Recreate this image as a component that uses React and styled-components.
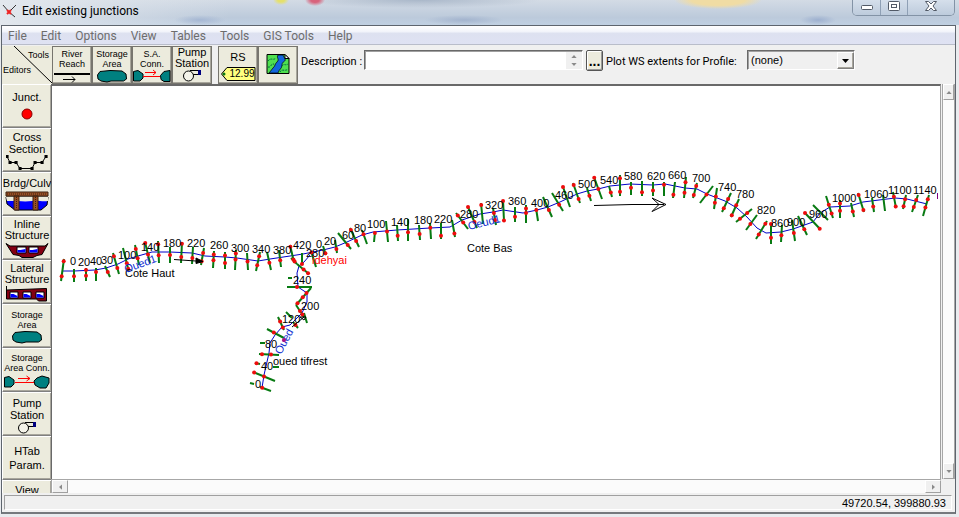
import React from "react";
import styled, { createGlobalStyle, css } from "styled-components";

const GlobalStyle = createGlobalStyle`
  * { box-sizing: border-box; }
  html, body { margin: 0; height: 100%; overflow: hidden; }
  body { font-family: "Liberation Sans", Arial, sans-serif; font-size: 11px; color: #000; }
  button, input, select, textarea { font: inherit; color: inherit; border-radius: 0; }
`;

const Frame = styled.div`
  height: 100vh;
  display: flex;
  flex-direction: column;
  background: #e9ebee;
`;

const TitleBar = styled.header`
  height: 25px;
  flex: none;
  display: flex;
  align-items: flex-start;
  padding: 0 4px 0 2px;
  background:
    radial-gradient(ellipse 8px 5px at 281px 0, #e5e06b 40%, transparent 100%),
    radial-gradient(ellipse 10px 6px at 315px 0, #d8637c 40%, transparent 100%),
    radial-gradient(ellipse 26px 5px at 200px 20px, #a5b7d3, transparent),
    radial-gradient(ellipse 40px 5px at 464px 20px, #a3b4ce, transparent),
    radial-gradient(ellipse 18px 5px at 818px 20px, #9db0cf, transparent),
    radial-gradient(ellipse 44px 9px at 718px 0, #f0dca4 60%, transparent 100%),
    radial-gradient(ellipse 120px 8px at 420px 0, #a9b7c9, transparent),
    linear-gradient(90deg, #e2e7ed, transparent 24%),
    linear-gradient(#d3dbe5, #bccadb 70%, #c0d0e2);
`;

const Title = styled.h1`
  flex: 1;
  margin: 0 0 0 4px;
  font: 12px/22px Roboto, "Segoe UI", sans-serif;
`;

const WindowButtons = styled.div`
  display: flex;
  height: 16px;
  border: 1px solid #8393a6;
  border-top: 0;
  border-radius: 0 0 5px 5px;
  overflow: hidden;
`;

const WindowButton = styled.button`
  width: ${(p) => (p.$wide ? 47 : 27)}px;
  padding: 0;
  border: 0;
  border-left: ${(p) => (p.$first ? "0" : "1px solid #8fa0b5")};
  background: linear-gradient(#d5dfeb, #bdcbdc);
  display: flex;
  justify-content: center;
  align-items: flex-start;
`;

const Client = styled.div`
  flex: 1;
  min-height: 0;
  margin: 0 3px 3px 1px;
  border: 1px solid #5e656e;
  border-bottom: 2px solid #75797d;
  display: flex;
  flex-direction: column;
  background: #f0f0f0;
`;

const MenuBar = styled.nav`
  height: 19px;
  flex: none;
  display: flex;
  align-items: center;
  gap: 14px;
  padding: 1px 6px 0;
  background: linear-gradient(#fff 0, #f3f5fb 30%, #dde1f0 42%, #dfe2f3 100%);
  border-bottom: 1px solid #b9bdca;
`;

const MenuItem = styled.button`
  padding: 0;
  border: 0;
  background: none;
  color: #6d6d6d;
  font: 12px/16px Roboto, "Segoe UI", sans-serif;
`;

const ToolBar = styled.div`
  height: 39px;
  flex: none;
  display: flex;
  align-items: flex-start;
  padding-top: 1px;
`;

const Corner = styled.div`
  width: 50px;
  height: 38px;
  flex: none;
  position: relative;
  display: flex;
  flex-direction: column;
  justify-content: space-between;
  padding: 3px 3px 8px 1px;
  background: #ecebdd;
  font-size: 9px;
  line-height: 12px;
`;

const CornerLine = styled.svg`
  position: absolute;
  inset: 0;
  width: 100%;
  height: 100%;
`;

const CornerText = styled.span`
  text-align: ${(p) => p.$align};
`;

const raised = css`
  border: 1px solid;
  border-color: #fff #808080 #808080 #fff;
  box-shadow: inset -1px -1px #a8a69c;
`;

const Tile = styled.button`
  ${raised}
  flex: none;
  width: ${(p) => (p.$side ? 50 : 40)}px;
  height: ${(p) => (p.$side ? 44 : 38)}px;
  padding: ${(p) => p.$pad || 0}px 0 0;
  display: flex;
  flex-direction: column;
  align-items: center;
  background: #ecebdd;
  outline: ${(p) => (p.$side ? "0" : "1px solid #77756e")};
  outline-offset: -1px;
  font-size: ${(p) => (p.$small ? 9 : 11)}px;
  line-height: ${(p) => p.$line || (p.$small ? 10 : 12)}px;
  white-space: pre;
  overflow: hidden;

  & > svg { flex: none; display: block; margin-top: ${(p) => p.$gap || 0}px; }
`;

const ToolGroup = styled.div`
  display: flex;
  margin-right: ${(p) => p.$after}px;
`;

const FieldLabel = styled.label`
  flex: none;
  min-width: ${(p) => p.$width}px;
  font-family: Roboto, sans-serif;
  line-height: 31px;
  white-space: nowrap;
`;

const sunken = css`
  border: 1px solid;
  border-color: #696969 #fff #fff #696969;
  box-shadow: inset 1px 1px #a0a0a0;
`;

const DescriptionBox = styled.div`
  ${sunken}
  width: 219px;
  height: 20px;
  margin: 4px 3px 0 0;
  display: flex;
  background: #fff;
`;

const Description = styled.textarea`
  flex: 1;
  min-width: 0;
  height: 18px;
  padding: 2px 3px;
  border: 0;
  background: transparent;
  resize: none;
  outline: 0;
  overflow: hidden;
`;

const Spinner = styled.div`
  width: 16px;
  margin-top: 1px;
  display: flex;
  flex-direction: column;
  background: #f0f0f0;
`;

const SpinButton = styled.button`
  flex: 1;
  padding: 0;
  border: 0;
  background: transparent;
  display: grid;
  place-items: center;
`;

const Ellipsis = styled.button`
  width: 17px;
  height: 21px;
  margin: 4px 3px 0 0;
  padding: 0;
  border: 1px solid #555;
  border-radius: 2px;
  background: #ecebdd;
  box-shadow: inset 1px 1px #fff, inset -1px -1px #999;
  font-weight: bold;
  font-size: 14px;
  line-height: 14px;
`;

const SelectBox = styled.div`
  ${sunken}
  position: relative;
  width: 108px;
  height: 20px;
  margin-top: 4px;
`;

const Select = styled.select`
  appearance: none;
  width: 100%;
  height: 100%;
  padding: 0 18px 0 3px;
  border: 0;
  background: transparent;
  outline: 0;
`;

const SelectArrow = styled.span`
  ${raised}
  position: absolute;
  top: 1px;
  right: 0;
  width: 17px;
  height: 17px;
  display: grid;
  place-items: center;
  background: #f0f0f0;
  pointer-events: none;
`;

const Main = styled.main`
  flex: 1;
  min-height: 0;
  display: grid;
  grid-template-columns: 49px minmax(0, 1fr) 14px;
  grid-template-rows: minmax(0, 1fr) 14px;
`;

const Sidebar = styled.aside`
  grid-row: 1 / 3;
  display: flex;
  flex-direction: column;
  overflow: hidden;
  background: #8d8d89;
`;

const Canvas = styled.section`
  border: solid #696969;
  border-width: 2px 1px 0 1px;
  border-right-color: #a0a0a0;
  background: #fff;
  overflow: hidden;
`;

const MapDrawing = styled.svg`
  display: block;
  width: 100%;
  height: 100%;
`;

const ScrollTrack = styled.div`
  display: flex;
  justify-content: space-between;
  flex-direction: ${(p) => (p.$vertical ? "column" : "row")};
  margin-left: ${(p) => (p.$vertical ? 1 : 0)}px;
  background: #fbfbfb;
  border: solid #a7a7a7;
  border-width: ${(p) => (p.$vertical ? "0 1px" : "1px 0 0 1px")};
`;

const ScrollButton = styled.button`
  ${raised}
  width: ${(p) => (p.$vertical ? "100%" : "16px")};
  height: ${(p) => (p.$vertical ? "16px" : "100%")};
  padding: 0;
  display: grid;
  place-items: center;
  background: #f0f0f0;
  border-color: #fff #a0a0a0 #a0a0a0 #fff;
  box-shadow: none;
`;

const StatusBar = styled.footer`
  flex: none;
  height: 19px;
  padding: 2px 3px 1px 2px;
  background: #f0f0f0;
`;

const Coordinates = styled.output`
  display: block;
  height: 15px;
  padding-right: 5px;
  border: 1px solid;
  border-color: #a0a0a0 #fff #fff #a0a0a0;
  text-align: right;
  line-height: 14px;
`;

const Arrow = ({ dir, color = "#8a8a8a", small }) => {
  const d = {
    up: "M0 4h7L3.5 0z",
    down: "M0 0h7L3.5 4z",
    left: "M4 0v7L0 3.5z",
    right: "M0 0v7l4-3.5z",
  }[dir];
  const tall = dir === "left" || dir === "right";
  const w = tall ? 4 : 7;
  const h = tall ? 7 : 4;
  return (
    <svg width={small ? w - 1 : w} height={small ? h - 1 : h} viewBox={`0 0 ${w} ${h}`} fill={color} aria-hidden="true">
      <path d={d} />
    </svg>
  );
};

const TEAL = "#008080";

const RiverIcon = () => (
  <svg width="36" height="12" fill="none" stroke="#000">
    <path d="M0 3h36" strokeWidth="2" />
    <path d="M9 8.500h12M18 5.500l3 3-3 3" />
  </svg>
);

const StorageIcon = () => (
  <svg width="32" height="14">
    <path d="M4 2.500 14 1.500 26 2l4 3 .5 5-3 2H15l-4 1-6-1-3-2-.500-4z" fill={TEAL} stroke="#000" />
  </svg>
);

const ConnIcon = ({ wide }) => (
  <svg width={wide ? 46 : 38} height="14">
    <path d="M.5 2.500 5 1.500l5 3.500v4l-3 3H.5z" fill={TEAL} stroke="#000" />
    <path
      d={wide ? "M33 3l5-2 7 2v5l-3 5h-6l-5-3-1-4z" : "M31 2.500l6-1v11h-6l-3-2-.5-4z"}
      fill={TEAL}
      stroke="#000"
    />
    <path
      d={wide ? "M11 7.500h19M14 3.500h12M22.500 1l3.500 2.500L22.500 6" : "M10 7.500h17M12 3.500h11M20 1l3 2.500L20 6"}
      stroke="#f00"
      fill="none"
    />
  </svg>
);

const PumpIcon = () => (
  <svg width="20" height="13">
    <path d="M8 1.500h10v4h-7" fill="#ecebdd" stroke="#000" />
    <path d="M16 1h3v5h-3z" fill="#000080" />
    <circle cx="6.500" cy="7" r="5" fill="#f4f3e9" stroke="#000" />
  </svg>
);

const TagFrame = styled.span`
  position: relative;
  display: block;
  width: 36px;
  height: 16px;
  margin-top: 3px;
`;

const TagShape = styled.svg`
  position: absolute;
  inset: 0;
`;

const TagText = styled.span`
  position: relative;
  display: block;
  padding-left: 8px;
  font-size: 10px;
  line-height: 16px;
  text-align: center;
`;

const MapIcon = () => (
  <svg width="24" height="21">
    <path d="M1 .5h18l4 4v15H1z" fill="#4fe04f" stroke="#000" />
    <path d="M12 1c-2 3 2 4-1 7s-1 3-4 6l-4 5h9c1-4 4-4 4-8s4-3 3-6l-2-4z" fill="#1267dc" stroke="#000" strokeWidth=".7" />
    <path d="M19 .5v4h4z" fill="#fff" stroke="#000" />
    <path d="M2 7c3-4 5 0 8-3M2 13c3 1 2-3 6-3M16 12c2-3 3 0 6-2M14 18c2-4 5 0 8-3" stroke="#064" fill="none" strokeDasharray="2 1" />
  </svg>
);

const JunctionIcon = () => (
  <svg width="12" height="12">
    <circle cx="6" cy="6" r="5" fill="#f00" stroke="#800" />
  </svg>
);

const CrossIcon = () => (
  <svg width="42" height="16" stroke="#000" fill="none">
    <path d="M1 1.500 4 7.500h6l4 6h12l3-6h7l4-6" />
    <path
      d="M1 1.500h.1M4 7.500h.1M10 7.500h.1M14 13.500h.1M26 13.500h.1M29 7.500h.1M36 7.500h.1M40 1.500h.1"
      strokeWidth="3"
      strokeLinecap="square"
    />
  </svg>
);

const BridgeIcon = () => (
  <svg width="44" height="22">
    <path d="M1 7h42l-1 8-6 5H10l-8-6z" fill="#00f" stroke="#000" />
    <path d="M1 7h42v4c-6 1-10-1-16 0s-14 0-25 0z" fill="#ecebdd" />
    <path d="M1 2h42v4H1zM9 6h5v14H9zM28 6h5v14h-5z" fill="#995026" stroke="#3c2010" />
    <path d="M2 4h40M11.500 7v12M30.500 7v12" stroke="#3c2010" strokeDasharray="1 1" />
  </svg>
);

const InlineIcon = () => (
  <svg width="44" height="17">
    <path d="M1 1.500 5 4h35l3-2.500-6 11-5 1-4 2H17l-3-2-6-1z" fill="#840012" stroke="#000" />
    <path d="M12 5h9v6h-9zM24 5h9v6h-9z" fill="#fff" stroke="#000" />
    <path d="M12.500 8h3l5-1v3.500h-8zM24.500 8h3l5-1v3.500h-8z" fill="#00f" />
  </svg>
);

const LateralIcon = () => (
  <svg width="44" height="17">
    <path d="M1.500 0v13l30 0 2 2h8V2.500L2 4" fill="#840012" stroke="#000" />
    <path d="M5 6h8v6H5zM18 6h8v6h-8zM31 6h8v6h-8z" fill="#fff" stroke="#000" />
    <path d="M5.500 8h3l4 2v1.500h-7zM18.500 8h3l4 2v1.500h-7zM31.500 8h3l4 2v1.500h-7z" fill="#00f" />
  </svg>
);

const sideTiles = [
  { label: "Junct.", icon: <JunctionIcon />, pad: 6, gap: 5 },
  { label: "Cross\nSection", icon: <CrossIcon />, pad: 2 },
  { label: "Brdg/Culv", icon: <BridgeIcon />, pad: 4, gap: 1 },
  { label: "Inline\nStructure", icon: <InlineIcon />, pad: 2, line: 11, gap: 1 },
  { label: "Lateral\nStructure", icon: <LateralIcon />, pad: 2, line: 11, gap: 1 },
  { label: "Storage\nArea", icon: <StorageIcon />, pad: 5, small: true },
  { label: "Storage\nArea Conn.", icon: <ConnIcon wide />, pad: 4, small: true, gap: 2 },
  { label: "Pump\nStation", icon: <PumpIcon />, pad: 4 },
  { label: "HTab\nParam.", pad: 7, line: 14 },
  { label: "View", pad: 3 },
];

/* Each cut line: x1, y1, x2, y2, then bank station positions in percent of its length */
const sections = [
  [64, 259, 61, 281, 10, 78], [74, 269, 74, 282, 55], [86, 268, 86, 281, 15, 60], [96, 268, 96, 281, 30],
  [105, 266, 110, 277, 55], [113, 253, 119, 274, 15, 72], [123, 248, 129, 272, 64, 86], [135, 245, 139, 265, 20, 66],
  [145, 242, 150, 263, 5, 60], [158, 241, 159, 263, 15, 65], [170, 247, 170, 263, 50], [182, 242, 181, 263, 8, 72],
  [193, 247, 192, 264, 65], [204, 248, 201, 265, 30, 78], [214, 251, 213, 268, 20, 55], [225, 252, 225, 269, 20, 64],
  [236, 250, 235, 270, 17, 47], [247, 253, 248, 270, 50], [260, 252, 256, 271, 22, 70], [267, 252, 271, 270, 60],
  [279, 250, 281, 267, 60], [290, 245, 294, 262, 10, 85], [302, 253, 302, 264, 100], [311, 251, 316, 267, 10],
  [323, 246, 326, 255, 80], [335, 240, 337, 253, 70], [338, 233, 351, 249, 75], [350, 228, 359, 247, 10, 68],
  [362, 230, 367, 244, 30], [375, 232, 374, 242, 10], [386, 221, 388, 242, 50], [397, 225, 398, 241, 67],
  [408, 219, 408, 241, 60], [419, 225, 420, 240, 60], [430, 223, 431, 239, 30], [441, 223, 441, 239, 80],
  [452, 220, 455, 237, 80], [456, 213, 468, 229, 15, 60], [468, 207, 477, 228, 0, 72], [481, 203, 483, 224, 10],
  [493, 208, 496, 225, 30, 70], [503, 200, 504, 221, 5, 98], [515, 207, 515, 222, 65], [526, 205, 526, 223, 20, 45],
  [536, 208, 538, 221, 15], [543, 197, 552, 217, 65], [552, 193, 563, 211, 65], [563, 187, 570, 207, 0],
  [573, 183, 580, 203, 10, 80], [587, 188, 591, 201, 60], [594, 177, 602, 199, 3, 55], [609, 186, 612, 197, 60],
  [620, 175, 620, 196, 15, 80], [631, 182, 631, 195, 45], [642, 181, 642, 196, 75], [653, 182, 653, 196, 60],
  [664, 182, 664, 196, 20], [675, 182, 673, 198, 80], [686, 177, 684, 198, 25, 75], [697, 183, 693, 198, 20, 80],
  [713, 186, 700, 203, 50], [717, 188, 714, 209, 40, 70], [731, 193, 722, 212, 32, 80], [739, 199, 731, 217, 35, 90],
  [752, 209, 736, 222, 30, 75], [757, 215, 746, 230, 60], [767, 221, 756, 239, 15, 75], [771, 223, 771, 244, 5, 70],
  [782, 225, 781, 242, 60], [792, 220, 795, 241, 62], [798, 216, 807, 235, 70], [805, 213, 820, 229, 0, 98],
  [813, 205, 828, 220], [826, 196, 833, 218, 40, 80], [840, 200, 840, 218, 20, 60], [851, 203, 854, 217, 60],
  [858, 193, 864, 212, 10, 90], [872, 198, 874, 212, 60], [883, 195, 885, 211], [893, 192, 896, 208, 30, 90],
  [906, 195, 903, 209, 30, 80], [918, 195, 912, 212, 30, 70], [929, 195, 923, 216, 20, 60],
  [291, 258, 297, 264, 60], [297, 264, 309, 274, 55, 92], [288, 278, 292, 278], [287, 287, 312, 287, 40],
  [311, 288, 296, 305, 30, 55, 90], [296, 305, 304, 317, 50, 80], [304, 313, 307, 323], [286, 312, 292, 318],
  [278, 317, 284, 330, 35, 80], [293, 322, 298, 328, 50], [267, 329, 284, 338, 40], [260, 343, 265, 343],
  [259, 354, 279, 355, 15, 60], [255, 363, 260, 364, 30], [273, 367, 279, 367], [253, 372, 275, 381, 5, 50],
  [250, 383, 254, 384], [260, 387, 271, 391, 20],
];

const stations = [
  ["0", 70, 265], ["20", 78, 266], ["40", 90, 265], ["30", 101, 264], ["100", 118, 259], ["140", 141, 251],
  ["180", 163, 247], ["220", 187, 247], ["260", 210, 249], ["300", 231, 252], ["340", 252, 253], ["380", 273, 254],
  ["420", 293, 249], ["0", 316, 248], ["20", 324, 245], ["60", 342, 239], ["80", 354, 232], ["100", 367, 228],
  ["140", 391, 226], ["180", 414, 224], ["220", 434, 223], ["280", 460, 218], ["320", 485, 209], ["360", 508, 205],
  ["400", 531, 207], ["460", 555, 199], ["500", 578, 188], ["540", 600, 184], ["580", 624, 180], ["620", 647, 180],
  ["660", 668, 179], ["700", 692, 182], ["740", 718, 191], ["780", 736, 198], ["820", 757, 214], ["860", 771, 227],
  ["900", 787, 226], ["960", 809, 218], ["1000", 832, 202], ["1060", 864, 198], ["1100", 888, 194], ["1140", 913, 194],
  ["280", 306, 257], ["240", 293, 284], ["200", 301, 310], ["120", 282, 323], ["80", 265, 348], ["40", 261, 370],
  ["0", 255, 388],
];

const RiverMap = () => (
  <MapDrawing role="img" aria-label="River system schematic">
    <g transform="translate(-52 -86)">
      <g fill="none" stroke="#0000c8">
        <polyline points="62,271 74,271 95,270 106,268 118,264 128,259 138,256 152,252 170,252 192,253 205,256 225,257 237,258 258,261 270,259 290,256 303,254 323,250 335,247 347,242 362,235 373,232 397,230 430,228 450,227 462,220 480,214 493,212 503,210 523,213 537,210 548,207 560,202 577,194 587,191 598,189 610,186 630,184 653,185 665,184 685,188 697,189 707,194 725,201 737,208 747,217 757,228 766,233 781,232 793,229 813,222 820,213 830,207 850,206 863,202 895,198 907,199 927,204" />
        <polyline points="310,255 304,262 299,266 297,273 298,287 307,293 307,302 302,313 290,325 282,327 275,335 270,343 269,353 264,375 262,388" />
      </g>
      <g stroke="#087a12" strokeWidth="2">
        {sections.map(([a, b, c, d], i) => (
          <line key={i} x1={a} y1={b} x2={c} y2={d} />
        ))}
      </g>
      <g fill="#ee0c0c">
        {sections.map(([a, b, c, d, ...banks], i) =>
          banks.map((t) => (
            <circle key={`${i}-${t}`} cx={a + ((c - a) * t) / 100} cy={b + ((d - b) * t) / 100} r="2" />
          ))
        )}
      </g>
      <g stroke="#000" fill="none">
        <path d="M174 259.500 203 261.500" />
        <path d="M196 258l7 3.500-7 2z" fill="#000" />
        <path d="M594 205.500 632 204.500H664M652 198l14 6.500-14 7 7-7z" />
        <path d="M292 327l12-10M300 317h6l-2 3z" />
      </g>
      <path d="M937.500 193v6" stroke="#800080" />
      <g fontFamily='"Liberation Sans", Arial, sans-serif' fontSize="11">
        {stations.map(([text, x, y]) => (
          <text key={`${x}-${y}`} x={x} y={y}>{text}</text>
        ))}
        <text x="125" y="277">Cote Haut</text>
        <text x="467" y="252">Cote Bas</text>
        <text x="273" y="365">oued tifrest</text>
        <text x="312" y="264" fill="#f00">idehyai</text>
        <g fill="#0c2bd0">
          <text transform="translate(126 273) rotate(-20)">Oued1</text>
          <text transform="translate(469 230) rotate(-14)">Oeud1</text>
          <text transform="translate(281 355) rotate(-62)">Oued</text>
        </g>
        <circle cx="284" cy="340" r="2" fill="#b01080" />
      </g>
    </g>
  </MapDrawing>
);

const menus = ["File", "Edit", "Options", "View", "Tables", "Tools", "GIS Tools", "Help"];

export default function App() {
  return (
    <Frame>
      <GlobalStyle />
      <TitleBar>
        <svg width="16" height="20" fill="none" stroke="#333" aria-hidden="true">
          <path d="M1 5l6 7L14 5M7 12l6 5" />
          <path d="M5 10l4 4M9 10l-4 4" stroke="#e22" strokeWidth="2" />
        </svg>
        <Title>Edit existing junctions</Title>
        <WindowButtons>
          <WindowButton $first aria-label="Minimize">
            <svg width="12" height="14"><rect x=".5" y="5.500" width="11" height="4" rx="1" fill="#fff" stroke="#525a67" /></svg>
          </WindowButton>
          <WindowButton aria-label="Maximize">
            <svg width="12" height="14" fill="#fff" stroke="#525a67"><rect x=".5" y="1.500" width="11" height="9" rx="1" /><rect x="3.500" y="4.500" width="5" height="3" /></svg>
          </WindowButton>
          <WindowButton $wide aria-label="Close">
            <svg width="12" height="14"><path d="M.5 1.500h3L6 4l2.500-2.500h3L8 6l3.500 4.500h-3L6 8l-2.500 2.500h-3L4 6z" fill="#fff" stroke="#525a67" /></svg>
          </WindowButton>
        </WindowButtons>
      </TitleBar>
      <Client>
        <MenuBar>
          {menus.map((m) => <MenuItem key={m}>{m}</MenuItem>)}
        </MenuBar>
        <ToolBar>
          <Corner>
            <CornerLine viewBox="0 0 50 38"><path d="M12 0 50 37" stroke="#000" /></CornerLine>
            <CornerText $align="right">Tools</CornerText>
            <CornerText $align="left">Editors</CornerText>
          </Corner>
          <ToolGroup $after={6}>
            <Tile $small $pad={2} $gap={2}>{"River\nReach"}<RiverIcon /></Tile>
            <Tile $small $pad={2}>{"Storage\nArea"}<StorageIcon /></Tile>
            <Tile $small $pad={2}>{"S.A.\nConn."}<ConnIcon /></Tile>
            <Tile $line={11}>{"Pump\nStation"}<PumpIcon /></Tile>
          </ToolGroup>
          <ToolGroup $after={3}>
            <Tile $pad={4}>
              RS
              <TagFrame>
                <TagShape width="36" height="16"><path d="M1.500 8 7 1.500h28v13H7z" fill="#ffff80" stroke="#000" /><circle cx="4" cy="8" r="1.500" fill="#087a12" /></TagShape>
                <TagText>12.99</TagText>
              </TagFrame>
            </Tile>
            <Tile $pad={7} aria-label="Background map"><MapIcon /></Tile>
          </ToolGroup>
          <FieldLabel $width={63} htmlFor="description">Description :</FieldLabel>
          <DescriptionBox>
            <Description id="description" rows={1} />
            <Spinner>
              <SpinButton aria-label="Scroll up"><Arrow dir="up" small /></SpinButton>
              <SpinButton aria-label="Scroll down"><Arrow dir="down" small /></SpinButton>
            </Spinner>
          </DescriptionBox>
          <Ellipsis aria-label="Edit description">...</Ellipsis>
          <FieldLabel $width={141} htmlFor="profile">Plot WS extents for Profile:</FieldLabel>
          <SelectBox>
            <Select id="profile" defaultValue="none"><option value="none">(none)</option></Select>
            <SelectArrow><Arrow dir="down" color="#000" /></SelectArrow>
          </SelectBox>
        </ToolBar>
        <Main>
          <Sidebar>
            {sideTiles.map((t) => (
              <Tile key={t.label} $side $small={t.small} $pad={t.pad} $gap={t.gap} $line={t.line}>
                {t.label}
                {t.icon}
              </Tile>
            ))}
          </Sidebar>
          <Canvas><RiverMap /></Canvas>
          <ScrollTrack $vertical>
            <ScrollButton $vertical aria-label="Scroll map up"><Arrow dir="up" small /></ScrollButton>
            <ScrollButton $vertical aria-label="Scroll map down"><Arrow dir="down" small /></ScrollButton>
          </ScrollTrack>
          <ScrollTrack>
            <ScrollButton aria-label="Scroll map left"><Arrow dir="left" small /></ScrollButton>
            <ScrollButton aria-label="Scroll map right"><Arrow dir="right" small /></ScrollButton>
          </ScrollTrack>
        </Main>
        <StatusBar>
          <Coordinates>49720.54, 399880.93</Coordinates>
        </StatusBar>
      </Client>
    </Frame>
  );
}
